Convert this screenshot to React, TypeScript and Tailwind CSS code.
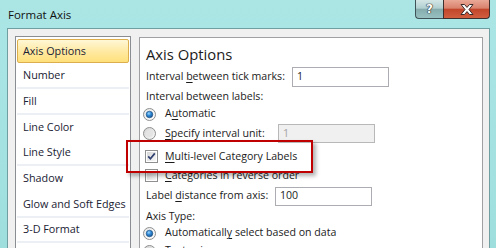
import React from "react";

function RadioOn() {
  return (
    <svg width="13" height="13" viewBox="0 0 13 13">
      <defs>
        <linearGradient id="rb" x1="0" y1="0" x2="1" y2="1">
          <stop offset="0" stopColor="#e6e6e6" />
          <stop offset="1" stopColor="#ffffff" />
        </linearGradient>
        <radialGradient id="rd" cx="0.4" cy="0.35" r="0.7">
          <stop offset="0" stopColor="#9fd6ff" />
          <stop offset="0.45" stopColor="#2f8ad6" />
          <stop offset="1" stopColor="#174f8c" />
        </radialGradient>
      </defs>
      <circle cx="6.5" cy="6.5" r="6" fill="url(#rb)" stroke="#8e8f8f" strokeWidth="1" />
      <circle cx="6.5" cy="6.5" r="3.3" fill="url(#rd)" stroke="#1d4f80" strokeWidth="0.6" />
    </svg>
  );
}

function RadioOff() {
  return (
    <svg width="13" height="13" viewBox="0 0 13 13">
      <defs>
        <linearGradient id="ro" x1="0" y1="0" x2="1" y2="1">
          <stop offset="0" stopColor="#d2d2d2" />
          <stop offset="1" stopColor="#fafafa" />
        </linearGradient>
      </defs>
      <circle cx="6.5" cy="6.5" r="6" fill="url(#ro)" stroke="#8e8f8f" strokeWidth="1" />
      <circle cx="6.5" cy="6.5" r="3.5" fill="#e4e4e4" />
    </svg>
  );
}

function Check({ on }: { on: boolean }) {
  return (
    <svg width="13" height="13" viewBox="0 0 13 13">
      <defs>
        <linearGradient id="cb" x1="0" y1="0" x2="1" y2="1">
          <stop offset="0" stopColor="#d6d6d6" />
          <stop offset="1" stopColor="#f8f8f8" />
        </linearGradient>
      </defs>
      <rect x="0.5" y="0.5" width="12" height="12" fill="#ffffff" stroke="#8e8f8f" />
      <rect x="2" y="2" width="9" height="9" fill="url(#cb)" />
      {on && (
        <path d="M3.2 6.4 L5.4 8.8 L9.8 3.4" fill="none" stroke="#2e3f70" strokeWidth="1.7" />
      )}
    </svg>
  );
}

const U = ({ children }: { children: React.ReactNode }) => <span className="underline underline-offset-[2px]">{children}</span>;

const listItems: { label: string; sep: boolean; selected?: boolean }[] = [
  { label: "Axis Options", sep: false, selected: true },
  { label: "Number", sep: true },
  { label: "Fill", sep: true },
  { label: "Line Color", sep: false },
  { label: "Line Style", sep: true },
  { label: "Shadow", sep: false },
  { label: "Glow and Soft Edges", sep: true },
  { label: "3-D Format", sep: true },
];

export default function App() {
  return (
    <div className="relative w-[496px] h-[248px] overflow-hidden font-['Open_Sans',sans-serif] text-[10.6px] text-[#1b1b1b] bg-[radial-gradient(ellipse_60px_30px_at_18%_45%,#c4f1ef,transparent),radial-gradient(ellipse_90px_25px_at_55%_25%,#c2f0ee,transparent),radial-gradient(ellipse_50px_30px_at_30%_30%,#94d6d6,transparent),radial-gradient(ellipse_60px_30px_at_78%_50%,#93d5d5,transparent),linear-gradient(180deg,#abe6e5,#9edfde)]">
      {/* Title bar */}
      <div className="h-[28px] flex items-start">
        <div className="pl-[8px] pt-[6px] text-[11.5px] leading-[18px] text-[#111]">Format Axis</div>
        <div className="ml-auto mr-[6px] flex">
          <div className="w-[28px] h-[19px] border border-t-0 border-r-0 border-[#3f5257] rounded-bl-[4px] bg-[linear-gradient(180deg,#d4e6e6_0%,#b2cfd0_45%,#86acae_52%,#98c0c1_100%)] flex items-center justify-center">
            <span className="font-['DejaVu_Sans',sans-serif] font-bold text-[12px] leading-none text-white [text-shadow:0_0_1px_#222,0_0_1px_#222,0_0_1px_#222]">?</span>
          </div>
          <div className="w-[47px] h-[19px] border border-t-0 border-[#3f3030] rounded-br-[4px] bg-[linear-gradient(180deg,#e9a897_0%,#d9826d_45%,#c2462b_52%,#d15e3f_100%)] flex items-center justify-center">
            <svg width="14" height="11" viewBox="0 0 14 11">
              <polygon points="1,0.5 4.5,0.5 7,3.4 9.5,0.5 13,0.5 9,5.5 13,10.5 9.5,10.5 7,7.6 4.5,10.5 1,10.5 5,5.5" fill="#ffffff" stroke="#3a2a28" strokeWidth="1" strokeLinejoin="round" />
            </svg>
          </div>
        </div>
      </div>

      {/* Client area */}
      <div className="ml-[7px] w-[483px] h-[240px] border border-b-0 border-[#6f9fa1] bg-[#f0f0f0] flex gap-[8px] pl-[7px] pr-[6px] pt-[7px]">
        {/* List */}
        <div className="w-[116px] shrink-0 h-[240px] bg-white border border-[#8a8d92] pt-[1px]">
          {listItems.map((it) => (
            <div key={it.label} className="h-[25.67px] px-[1px] flex flex-col whitespace-nowrap">
              {it.selected ? (
                <div className="mt-[1px] h-[24px] rounded-[2px] border border-[#dcae4c] bg-[linear-gradient(180deg,#fff7d6_0%,#ffeaa4_50%,#ffe07a_100%)] flex items-center pl-[5px] text-[#1a2233] text-[10.8px]">
                  {it.label}
                </div>
              ) : (
                <>
                  <div className="flex-1 flex items-center pl-[6px] text-[#1a2233] text-[10.8px]">{it.label}</div>
                  <div className={it.sep ? "h-[2px] bg-[#eceff4]" : "h-[2px]"} />
                </>
              )}
            </div>
          ))}
        </div>

        {/* Options panel */}
        <div className="flex-1 mt-[1px] h-[240px] bg-white border border-[#a0a0a4] flex flex-col whitespace-nowrap">
          <div className="h-[29px] pt-[3px] pl-[6px] flex items-center text-[14.8px] text-[#1b1b1b]">Axis Options</div>
          <div className="h-[20px] flex items-center pl-[6px]">
            <div className="w-[146px]">Interval <U>b</U>etween tick marks:</div>
            <div className="w-[97px] h-[20px] border border-[#abadb3] flex items-center pl-[4px]">1</div>
          </div>
          <div className="h-[19px] flex items-center pl-[6px]">Interval between labels:</div>
          <div className="h-[16px] flex items-center pl-[3px]">
            <RadioOn />
            <span className="ml-[9px]">A<U>u</U>tomatic</span>
          </div>
          <div className="h-[23px] flex items-center pl-[3px]">
            <div className="w-[135px] flex items-center">
              <RadioOff />
              <span className="ml-[9px]"><U>S</U>pecify interval unit:</span>
            </div>
            <div className="w-[97px] h-[19px] border border-[#b8b8b8] bg-[#f0f0f0] flex items-center pl-[4px] text-[#a3a3a3]">1</div>
          </div>
          <div className="h-[23px] flex items-center pl-[5px]">
            <Check on={true} />
            <span className="ml-[7px]"><U>M</U>ulti-level Category Labels</span>
          </div>
          <div className="h-[15px] flex items-center pl-[5px]">
            <Check on={false} />
            <span className="ml-[7px]"><U>C</U>ategories in reverse order</span>
          </div>
          <div className="h-[26px] flex items-center pl-[6px]">
            <div className="w-[129px]">Label <U>d</U>istance from axis:</div>
            <div className="w-[97px] h-[19px] border border-[#abadb3] flex items-center pl-[4px]">100</div>
          </div>
          <div className="h-[16px] flex items-center pl-[6px]">Axis Type:</div>
          <div className="h-[16px] flex items-center pl-[3px]">
            <RadioOn />
            <span className="ml-[9px]">Automaticall<U>y</U> select based on data</span>
          </div>
          <div className="h-[20px] flex items-center pl-[3px]">
            <RadioOff />
            <span className="ml-[9px]"><U>T</U>ext axis</span>
          </div>
        </div>
      </div>

      {/* Red highlight box */}
      <div className="absolute left-[126px] top-[140px] w-[187px] h-[33px] border-2 border-[#c00000] shadow-[3px_3px_4px_rgba(0,0,0,0.3)]" />
    </div>
  );
}
